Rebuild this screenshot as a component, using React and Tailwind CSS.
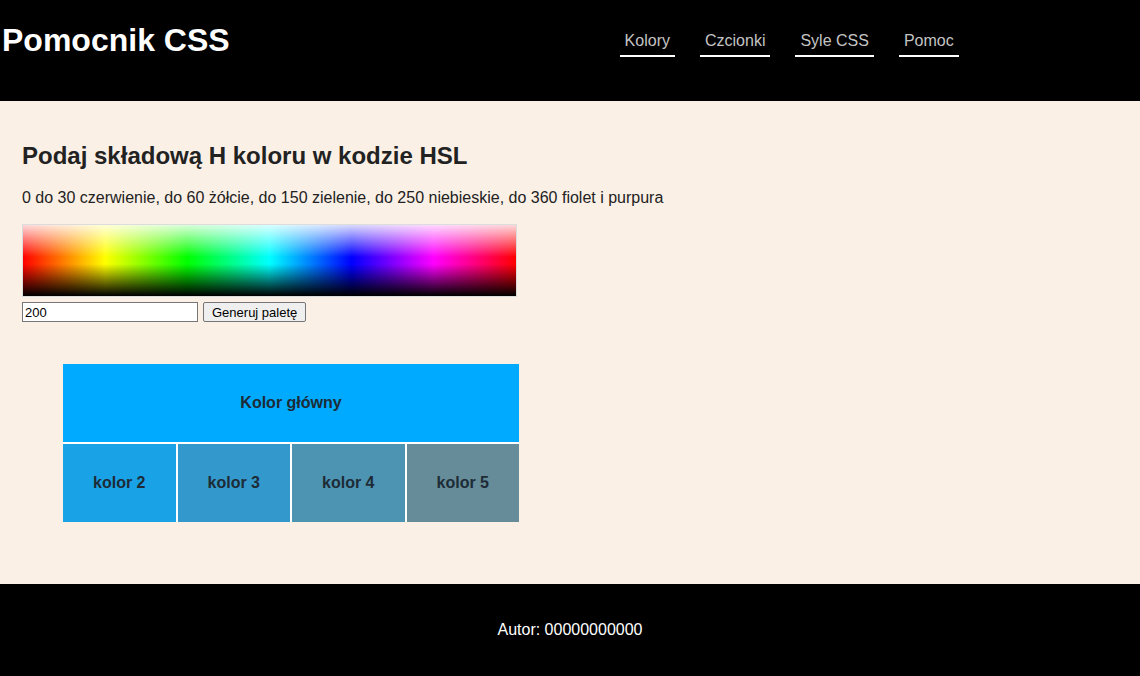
import React, { useState } from "react";

const navLinks = ["Kolory", "Czcionki", "Syle CSS", "Pomoc"];

const shades = [
  { label: "kolor 2", color: "#1aa2e6" },
  { label: "kolor 3", color: "#3399cc" },
  { label: "kolor 4", color: "#4d94b3" },
  { label: "kolor 5", color: "#668c99" },
];

// Header with title and navigation
const Header = () => (
  <header className="h-[101px] bg-black flex items-start">
    <h1 className="text-[32px] font-bold text-white leading-none pt-[24px] pl-[2px]">
      Pomocnik CSS
    </h1>
    <nav className="flex gap-[25px] ml-[390px] pt-[32px]">
      {navLinks.map((link) => (
        <a
          key={link}
          href="#"
          className="px-[5px] pb-[5px] text-[16px] leading-[18px] text-[#c4c4c4] border-b-2 border-white"
        >
          {link}
        </a>
      ))}
    </nav>
  </header>
);

const HueBar = () => (
  <div className="w-[495px] h-[73px] border border-[#dcdcdc] bg-[linear-gradient(to_bottom,rgba(255,255,255,0.85)_0%,rgba(255,255,255,0)_45%,rgba(0,0,0,0)_55%,#000_100%),linear-gradient(to_right,#f00_0%,#ff0_16.7%,#0f0_33.3%,#0ff_50%,#00f_66.7%,#f0f_83.3%,#f00_100%)]"></div>
);

const Palette = () => (
  <div className="w-[456px] ml-[41px] mt-[42px] flex flex-col gap-[2px] bg-white">
    <div className="h-[78px] bg-[#00aaff] flex items-center justify-center text-[16px] font-bold text-[#1d2b36]">
      Kolor główny
    </div>
    <div className="flex gap-[2px]">
      {shades.map((s) => (
        <div
          key={s.label}
          className="flex-1 h-[78px] flex items-center justify-center text-[16px] font-bold text-[#1d2b36]"
          style={{ backgroundColor: s.color }}
        >
          {s.label}
        </div>
      ))}
    </div>
  </div>
);

export default function App() {
  const [hue, setHue] = useState("200");

  return (
    <div className="font-['Liberation_Sans',Arial,sans-serif] w-[1140px] h-[676px] flex flex-col">
      <Header />
      <main className="h-[483px] bg-[#faf0e6] pl-[22px] pt-[42px] text-[#222]">
        <h2 className="text-[24px] font-bold leading-[26px]">
          Podaj składową H koloru w kodzie HSL
        </h2>
        <p className="text-[16px] leading-[18px] mt-[20px]">
          0 do 30 czerwienie, do 60 żółcie, do 150 zielenie, do 250 niebieskie, do 360 fiolet i purpura
        </p>
        <div className="mt-[17px]">
          <HueBar />
        </div>
        <div className="flex items-center gap-[5px] mt-[5px]">
          <input
            type="text"
            value={hue}
            onChange={(e) => setHue(e.target.value)}
            className="w-[176px] h-[20px] border border-[#767676] bg-white px-[2px] text-[13px] text-black outline-none"
          />
          <button className="h-[20px] px-[8px] border border-[#767676] rounded-[2px] bg-[#efefef] text-[13px] text-black leading-none">
            Generuj paletę
          </button>
        </div>
        <Palette />
      </main>
      <footer className="flex-1 bg-black flex items-center justify-center text-white text-[16px]">
        Autor: 00000000000
      </footer>
    </div>
  );
}
